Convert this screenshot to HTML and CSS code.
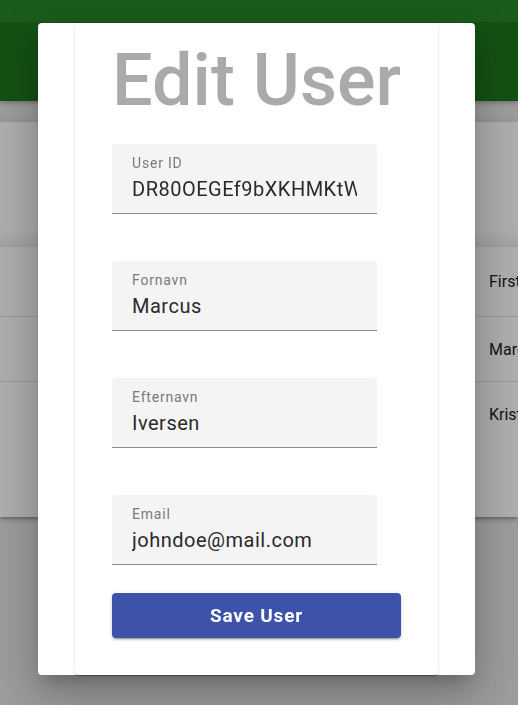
FILE: index.html
```html
<!DOCTYPE html>
<html lang="da">
<head>
<meta charset="utf-8">
<title>Edit User</title>
<link rel="stylesheet" href="styles.css">
</head>
<body>
<div class="app">
  <header class="toolbar">
    <div class="toolbar-top"></div>
    <div class="toolbar-main"></div>
  </header>
  <main class="content">
    <section class="table-card">
      <div class="card-head"></div>
      <div class="table">
        <div class="row row-head"><span class="cell-spacer"></span><span class="cell">First name</span></div>
        <div class="row"><span class="cell-spacer"></span><span class="cell">Marcus</span></div>
        <div class="row row-last"><span class="cell-spacer"></span><span class="cell">Kristian</span></div>
      </div>
    </section>
  </main>
</div>
<div class="backdrop"></div>
<div class="dialog">
  <div class="dialog-card">
    <h1 class="title">Edit User</h1>
    <form class="form">
      <label class="field">
        <span class="field-label">User ID</span>
        <span class="field-value">DR80OEGEf9bXKHMKtWq2</span>
      </label>
      <label class="field">
        <span class="field-label">Fornavn</span>
        <span class="field-value">Marcus</span>
      </label>
      <label class="field">
        <span class="field-label">Efternavn</span>
        <span class="field-value">Iversen</span>
      </label>
      <label class="field">
        <span class="field-label">Email</span>
        <span class="field-value">johndoe@mail.com</span>
      </label>
      <button type="button" class="save-btn">Save User</button>
    </form>
  </div>
</div>
</body>
</html>
```

FILE: styles.css
```css
* { box-sizing: border-box; }
html, body {
  margin: 0;
  padding: 0;
  height: 100%;
  overflow: hidden;
  font-family: Roboto, "Noto Sans", "Liberation Sans", sans-serif;
  background: #e6e6e6;
}
.app {
  display: flex;
  flex-direction: column;
}
.toolbar {
  display: flex;
  flex-direction: column;
  height: 101px;
  box-shadow: 0 2px 4px rgba(0,0,0,.25);
  position: relative;
  z-index: 1;
}
.toolbar-top {
  height: 22px;
  background: #278827;
}
.toolbar-main {
  flex: 1;
  background: #1c781c;
}
.content {
  padding-top: 21px;
}
.table-card {
  background: #ffffff;
  height: 395px;
  overflow: hidden;
  box-shadow: 0 3px 3px -2px rgba(0,0,0,.2), 0 3px 4px 0 rgba(0,0,0,.14), 0 1px 8px 0 rgba(0,0,0,.12);
  display: flex;
  flex-direction: column;
}
.card-head {
  height: 125px;
  background: linear-gradient(to bottom, rgba(0,0,0,0) 0, rgba(0,0,0,0) 108px, rgba(0,0,0,.08) 125px);
}
.table {
  display: flex;
  flex-direction: column;
}
.row {
  display: grid;
  grid-template-columns: 489px 1fr;
  align-items: center;
  height: 65px;
  border-bottom: 1px solid rgba(0,0,0,.12);
  font-size: 16px;
  color: #212121;
  white-space: nowrap;
}
.cell {
  overflow: hidden;
}
.row-head {
  height: 70px;
}
.row-last {
  border-bottom: none;
}
.backdrop {
  position: fixed;
  inset: 0;
  z-index: 10;
  background: rgba(0,0,0,.32);
}
.dialog {
  position: fixed;
  z-index: 11;
  left: 38px;
  top: 23px;
  width: 437px;
  height: 652px;
  background: #fff;
  border-radius: 4px;
  padding: 0 37px;
  box-shadow: 0 11px 15px -7px rgba(0,0,0,.2), 0 24px 38px 3px rgba(0,0,0,.14), 0 9px 46px 8px rgba(0,0,0,.12);
}
.dialog-card {
  height: 100%;
  background: #fff;
  border-radius: 4px;
  padding: 16px 37px 36px;
  box-shadow: 0 2px 1px -1px rgba(0,0,0,.2), 0 1px 1px 0 rgba(0,0,0,.14), 0 1px 3px 0 rgba(0,0,0,.12);
  display: flex;
  flex-direction: column;
}
.title {
  margin: 0;
  font-size: 72px;
  line-height: 84px;
  font-weight: 500;
  color: #aaaaaa;
  text-align: center;
  white-space: nowrap;
}
.form {
  margin-top: 21px;
  display: flex;
  flex-direction: column;
}
.field {
  width: 265px;
  background: #f4f4f4;
  border-radius: 4px 4px 0 0;
  border-bottom: 1px solid #8c8c8c;
  padding: 11px 20px 12px;
  display: flex;
  flex-direction: column;
  gap: 6px;
  margin-bottom: 47px;
}
.field:nth-of-type(4) {
  margin-bottom: 28px;
}
.field-label {
  font-size: 14px;
  line-height: 16px;
  color: #7a7a7a;
  letter-spacing: .8px;
}
.field-value {
  font-size: 20px;
  line-height: 24px;
  color: #2a2a2a;
  letter-spacing: .5px;
  white-space: nowrap;
  overflow: hidden;
}
.save-btn {
  height: 45px;
  width: 100%;
  border: none;
  border-radius: 4px;
  background: #3d53a9;
  color: #fff;
  font-family: inherit;
  font-size: 19px;
  font-weight: 700;
  letter-spacing: .8px;
  box-shadow: 0 3px 1px -2px rgba(0,0,0,.2), 0 2px 2px 0 rgba(0,0,0,.14), 0 1px 5px 0 rgba(0,0,0,.12);
  padding: 0;
}
```
